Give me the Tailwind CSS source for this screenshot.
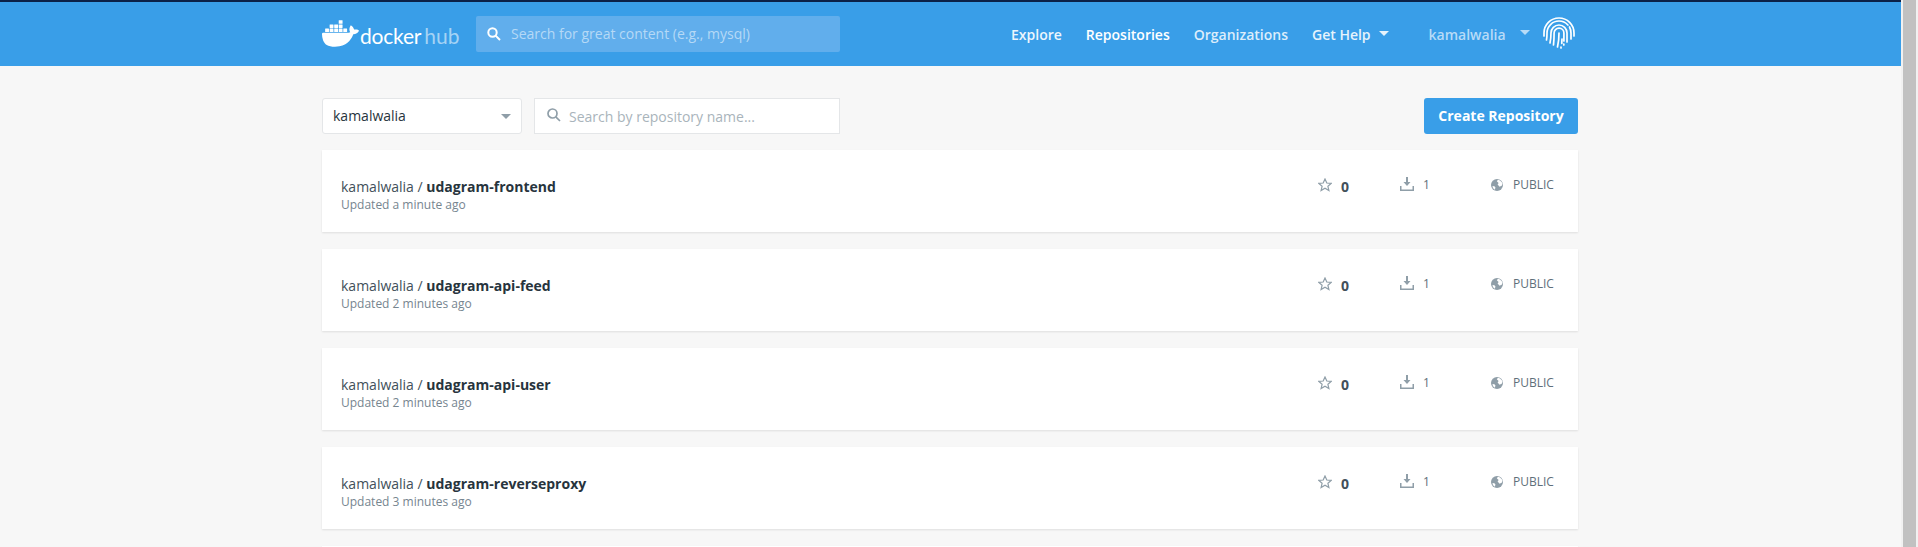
<!DOCTYPE html>
<html lang="en">
<head>
<meta charset="utf-8">
<title>Docker Hub</title>
<script src="https://cdn.jsdelivr.net/npm/@tailwindcss/browser@4"></script>
</head>
<body class="h-[547px] overflow-hidden bg-[#f1f1f1] font-['Open_Sans',sans-serif]">
<div class="flex h-[547px]">
  <div class="w-[1901px] h-[547px] shrink-0 overflow-hidden bg-[#f7f7f7]">
    <header class="h-[66px] bg-[#399ee8] border-t-2 border-[#0b2148]">
      <div class="w-[1256px] ml-[322px] h-full flex items-center">
        <div class="flex items-center w-[154px] h-[36px] mt-[-1px]">
          <svg class="w-[37px] h-[37px] shrink-0 fill-white" viewBox="0 0 24 24"><path d="M13.983 11.078h2.119a.186.186 0 00.186-.185V9.006a.186.186 0 00-.186-.186h-2.119a.185.185 0 00-.185.185v1.888c0 .102.083.185.185.185m-2.954-5.43h2.118a.186.186 0 00.186-.186V3.574a.186.186 0 00-.186-.185h-2.118a.185.185 0 00-.185.185v1.888c0 .102.082.185.185.186m0 2.716h2.118a.187.187 0 00.186-.186V6.29a.186.186 0 00-.186-.185h-2.118a.185.185 0 00-.185.185v1.887c0 .102.082.185.185.186m-2.93 0h2.12a.186.186 0 00.184-.186V6.29a.185.185 0 00-.185-.185H8.1a.185.185 0 00-.185.185v1.887c0 .102.083.185.185.186m-2.964 0h2.119a.186.186 0 00.185-.186V6.29a.185.185 0 00-.185-.185H5.136a.186.186 0 00-.186.185v1.887c0 .102.084.185.186.186m5.893 2.715h2.118a.186.186 0 00.186-.185V9.006a.186.186 0 00-.186-.186h-2.118a.185.185 0 00-.185.185v1.888c0 .102.082.185.185.185m-2.93 0h2.12a.185.185 0 00.184-.185V9.006a.185.185 0 00-.184-.186h-2.12a.185.185 0 00-.184.185v1.888c0 .102.083.185.185.185m-2.964 0h2.119a.185.185 0 00.185-.185V9.006a.185.185 0 00-.184-.186h-2.12a.186.186 0 00-.186.186v1.887c0 .102.084.185.186.185m-2.92 0h2.12a.185.185 0 00.184-.185V9.006a.185.185 0 00-.184-.186h-2.12a.185.185 0 00-.184.185v1.888c0 .102.082.185.185.185M23.763 9.89c-.065-.051-.672-.51-1.954-.51-.338.001-.676.03-1.01.087-.248-1.7-1.653-2.53-1.716-2.566l-.344-.199-.226.327c-.284.438-.49.922-.612 1.43-.23.97-.09 1.882.403 2.661-.595.332-1.55.413-1.744.42H.751a.751.751 0 00-.75.748 11.376 11.376 0 00.692 4.062c.545 1.428 1.355 2.48 2.41 3.124 1.18.723 3.1 1.137 5.275 1.137.983.003 1.963-.086 2.93-.266a12.248 12.248 0 003.823-1.389c.98-.567 1.86-1.288 2.61-2.136 1.252-1.418 1.998-2.997 2.553-4.4h.221c1.372 0 2.215-.549 2.68-1.009.309-.293.55-.65.707-1.046l.098-.288Z"/></svg>
          <span class="ml-px mt-[3px] text-[21px] leading-none font-normal tracking-[-0.2px] font-['Lato',sans-serif] text-white">docker</span>
          <span class="ml-[3px] mt-[3px] text-[21px] leading-none font-normal font-['Lato',sans-serif] text-[#a5d3f5]">hub</span>
        </div>
        <div class="w-[364px] h-[36px] bg-[#61aeec] rounded-[2px] flex items-center pl-[11px] mt-[-1px]">
          <svg class="w-[14px] h-[14px] fill-none stroke-white" stroke-width="2" viewBox="0 0 14 14"><circle cx="5.5" cy="5.5" r="4.2"/><path d="M8.6 8.6 13 13"/></svg>
          <span class="ml-[10px] text-[14px] text-[#b5d9f6]">Search for great content (e.g., mysql)</span>
        </div>
        <nav class="ml-[171px] flex items-center gap-[24px] text-[14px] font-semibold text-white">
          <span class="text-[#ecf6fd]">Explore</span>
          <span>Repositories</span>
          <span class="text-[#dcedfb]">Organizations</span>
          <span class="flex items-center gap-[8px] text-[#e6f3fc]">Get Help
            <svg class="w-[10px] h-[5px] fill-[#e6f3fc] mt-[-2px]" viewBox="0 0 10 5"><path d="M0 0h10L5 5z"/></svg>
          </span>
        </nav>
        <span class="ml-[40px] text-[14px] font-semibold text-[#b7dbf7]">kamalwalia</span>
        <svg class="ml-[14px] w-[10px] h-[5px] fill-[#b7dbf7] mt-[-4px]" viewBox="0 0 10 5"><path d="M0 0h10L5 5z"/></svg>
        <svg class="ml-[13px] w-[32px] h-[32px] fill-none stroke-white mt-[-2px]" stroke-width="1.700" stroke-linecap="round" viewBox="0 0 32 32">
          <path d="M1 19v-3C1 7.700 7.700 1 16 1c8.300 0 15 6.700 15 15v3"/>
          <path d="M3.500 23C4 21 4 19 4 16 4 9.400 9.400 4 16 4c3.500 0 6.700 1.500 8.900 4M26.500 10c.9 1.800 1.500 3.800 1.500 6v6"/>
          <path d="M7 26c.6-3 1-6 1-10 0-4.400 3.600-8 8-8s8 3.600 8 8v9"/>
          <path d="M10.500 28c.4-4 .6-8 .6-12 0-2.700 2.200-4.900 4.900-4.900s4.900 2.200 4.900 4.900v8M20.800 27v1"/>
          <path d="M14.500 30c.8-3.500 1.500-8 1.500-14M18 31v-1M19 26c-.4 1-.2 0 0-4"/>
        </svg>
      </div>
    </header>

    <main class="w-[1256px] ml-[322px] pt-[32px]">
      <div class="flex items-center h-[36px]">
        <div class="w-[200px] h-[36px] bg-white border border-[#e4e6e8] rounded-[3px] flex items-center justify-between pl-[10px] pr-[10px] pb-[2px] text-[14px] text-[#27343d]">
          kamalwalia
          <svg class="w-[10px] h-[5px] fill-[#8f9ea8] mt-[2px]" viewBox="0 0 10 5"><path d="M0 0h10L5 5z"/></svg>
        </div>
        <div class="ml-[12px] w-[306px] h-[36px] bg-white border border-[#e4e6e8] flex items-center pl-[12px] text-[14px] text-[#a9b4bb]">
          <svg class="w-[14px] h-[14px] mt-[-2px] fill-none stroke-[#8f9ea8]" stroke-width="1.700" viewBox="0 0 14 14"><circle cx="5.500" cy="5.500" r="4.500"/><path d="M8.800 8.800 13 13"/></svg>
          <span class="ml-[8px]">Search by repository name...</span>
        </div>
        <button class="ml-auto w-[154px] h-[36px] pb-[2px] bg-[#399ee8] rounded-[3px] text-white text-[14px] font-bold">Create Repository</button>
      </div>

      <div class="mt-[16px] flex flex-col gap-[17px]">
        <article class="h-[82px] bg-white shadow-[0_1px_2px_rgba(0,0,0,0.1)] flex pl-[19px]">
          <div class="flex-1 pt-[27px]">
            <p class="text-[14px] leading-[19px] text-[#42505a]">kamalwalia / <b class="font-bold text-[#27343d]">udagram-frontend</b></p>
            <p class="text-[12px] leading-[17px] text-[#76858f]">Updated a minute ago</p>
          </div>
          <div class="w-[82px] pt-[27px] flex items-start gap-[9px]"><svg class="w-[14px] h-[14px] mt-px fill-none stroke-[#8f9ea8]" stroke-width="1.200" viewBox="0 0 14 14"><path d="M7 1l1.800 4 4.400.4-3.300 2.900 1 4.300L7 10.300 3.100 12.600l1-4.300L.8 5.400 5.200 5z"/></svg><span class="text-[14px] leading-[19px] font-bold text-[#42505a]">0</span></div>
          <div class="w-[91px] pt-[26px] flex items-start gap-[9px]"><svg class="w-[14px] h-[14px] mt-px fill-[#8f9ea8]" viewBox="0 0 14 14"><path d="M6 0h2v5h2.500L7 9 3.500 5H6z"/><path d="M0 9h1.500v3.500h11V9H14v5H0z"/></svg><span class="text-[12px] leading-[18px] text-[#5f6f7a]">1</span></div>
          <div class="w-[87px] pt-[26px] flex items-start gap-[10px]"><svg class="w-[12px] h-[12px] mt-[3px]" viewBox="0 0 12 12"><circle cx="6" cy="6" r="6" fill="#8f9ea8"/><path d="M7 .8 5.800 2.200 7.600 4l-1 1.600 2 2.200 2.400-1.300.5-1.900C10.800 2.900 9.200 1.300 7 .8zM1.200 7.500 3 6.900l1.400 1.300-.4 2.300-1.100-.2z" fill="#fff"/></svg><span class="text-[12px] leading-[18px] text-[#5f6f7a]">PUBLIC</span></div>
        </article>
        <article class="h-[82px] bg-white shadow-[0_1px_2px_rgba(0,0,0,0.1)] flex pl-[19px]">
          <div class="flex-1 pt-[27px]">
            <p class="text-[14px] leading-[19px] text-[#42505a]">kamalwalia / <b class="font-bold text-[#27343d]">udagram-api-feed</b></p>
            <p class="text-[12px] leading-[17px] text-[#76858f]">Updated 2 minutes ago</p>
          </div>
          <div class="w-[82px] pt-[27px] flex items-start gap-[9px]"><svg class="w-[14px] h-[14px] mt-px fill-none stroke-[#8f9ea8]" stroke-width="1.200" viewBox="0 0 14 14"><path d="M7 1l1.800 4 4.400.4-3.300 2.900 1 4.300L7 10.300 3.100 12.600l1-4.300L.8 5.400 5.200 5z"/></svg><span class="text-[14px] leading-[19px] font-bold text-[#42505a]">0</span></div>
          <div class="w-[91px] pt-[26px] flex items-start gap-[9px]"><svg class="w-[14px] h-[14px] mt-px fill-[#8f9ea8]" viewBox="0 0 14 14"><path d="M6 0h2v5h2.500L7 9 3.500 5H6z"/><path d="M0 9h1.500v3.500h11V9H14v5H0z"/></svg><span class="text-[12px] leading-[18px] text-[#5f6f7a]">1</span></div>
          <div class="w-[87px] pt-[26px] flex items-start gap-[10px]"><svg class="w-[12px] h-[12px] mt-[3px]" viewBox="0 0 12 12"><circle cx="6" cy="6" r="6" fill="#8f9ea8"/><path d="M7 .8 5.800 2.200 7.600 4l-1 1.600 2 2.200 2.400-1.300.5-1.900C10.800 2.900 9.200 1.300 7 .8zM1.200 7.500 3 6.900l1.400 1.300-.4 2.300-1.100-.2z" fill="#fff"/></svg><span class="text-[12px] leading-[18px] text-[#5f6f7a]">PUBLIC</span></div>
        </article>
        <article class="h-[82px] bg-white shadow-[0_1px_2px_rgba(0,0,0,0.1)] flex pl-[19px]">
          <div class="flex-1 pt-[27px]">
            <p class="text-[14px] leading-[19px] text-[#42505a]">kamalwalia / <b class="font-bold text-[#27343d]">udagram-api-user</b></p>
            <p class="text-[12px] leading-[17px] text-[#76858f]">Updated 2 minutes ago</p>
          </div>
          <div class="w-[82px] pt-[27px] flex items-start gap-[9px]"><svg class="w-[14px] h-[14px] mt-px fill-none stroke-[#8f9ea8]" stroke-width="1.200" viewBox="0 0 14 14"><path d="M7 1l1.800 4 4.400.4-3.300 2.900 1 4.300L7 10.300 3.100 12.600l1-4.300L.8 5.400 5.200 5z"/></svg><span class="text-[14px] leading-[19px] font-bold text-[#42505a]">0</span></div>
          <div class="w-[91px] pt-[26px] flex items-start gap-[9px]"><svg class="w-[14px] h-[14px] mt-px fill-[#8f9ea8]" viewBox="0 0 14 14"><path d="M6 0h2v5h2.500L7 9 3.500 5H6z"/><path d="M0 9h1.500v3.500h11V9H14v5H0z"/></svg><span class="text-[12px] leading-[18px] text-[#5f6f7a]">1</span></div>
          <div class="w-[87px] pt-[26px] flex items-start gap-[10px]"><svg class="w-[12px] h-[12px] mt-[3px]" viewBox="0 0 12 12"><circle cx="6" cy="6" r="6" fill="#8f9ea8"/><path d="M7 .8 5.800 2.200 7.600 4l-1 1.600 2 2.200 2.400-1.300.5-1.900C10.800 2.900 9.200 1.300 7 .8zM1.200 7.500 3 6.900l1.400 1.300-.4 2.300-1.100-.2z" fill="#fff"/></svg><span class="text-[12px] leading-[18px] text-[#5f6f7a]">PUBLIC</span></div>
        </article>
        <article class="h-[82px] bg-white shadow-[0_1px_2px_rgba(0,0,0,0.1)] flex pl-[19px]">
          <div class="flex-1 pt-[27px]">
            <p class="text-[14px] leading-[19px] text-[#42505a]">kamalwalia / <b class="font-bold text-[#27343d]">udagram-reverseproxy</b></p>
            <p class="text-[12px] leading-[17px] text-[#76858f]">Updated 3 minutes ago</p>
          </div>
          <div class="w-[82px] pt-[27px] flex items-start gap-[9px]"><svg class="w-[14px] h-[14px] mt-px fill-none stroke-[#8f9ea8]" stroke-width="1.200" viewBox="0 0 14 14"><path d="M7 1l1.800 4 4.400.4-3.300 2.900 1 4.300L7 10.300 3.100 12.600l1-4.300L.8 5.400 5.200 5z"/></svg><span class="text-[14px] leading-[19px] font-bold text-[#42505a]">0</span></div>
          <div class="w-[91px] pt-[26px] flex items-start gap-[9px]"><svg class="w-[14px] h-[14px] mt-px fill-[#8f9ea8]" viewBox="0 0 14 14"><path d="M6 0h2v5h2.500L7 9 3.500 5H6z"/><path d="M0 9h1.500v3.500h11V9H14v5H0z"/></svg><span class="text-[12px] leading-[18px] text-[#5f6f7a]">1</span></div>
          <div class="w-[87px] pt-[26px] flex items-start gap-[10px]"><svg class="w-[12px] h-[12px] mt-[3px]" viewBox="0 0 12 12"><circle cx="6" cy="6" r="6" fill="#8f9ea8"/><path d="M7 .8 5.800 2.200 7.600 4l-1 1.600 2 2.200 2.400-1.300.5-1.900C10.800 2.900 9.200 1.300 7 .8zM1.200 7.500 3 6.900l1.400 1.300-.4 2.300-1.100-.2z" fill="#fff"/></svg><span class="text-[12px] leading-[18px] text-[#5f6f7a]">PUBLIC</span></div>
        </article>
        <article class="h-[82px] bg-white shadow-[0_1px_2px_rgba(0,0,0,0.1)]"></article>
      </div>
    </main>
  </div>
  <div class="ml-[2px] w-[13px] h-[547px] bg-[#c1c1c1]"></div>
</div>
</body>
</html>
